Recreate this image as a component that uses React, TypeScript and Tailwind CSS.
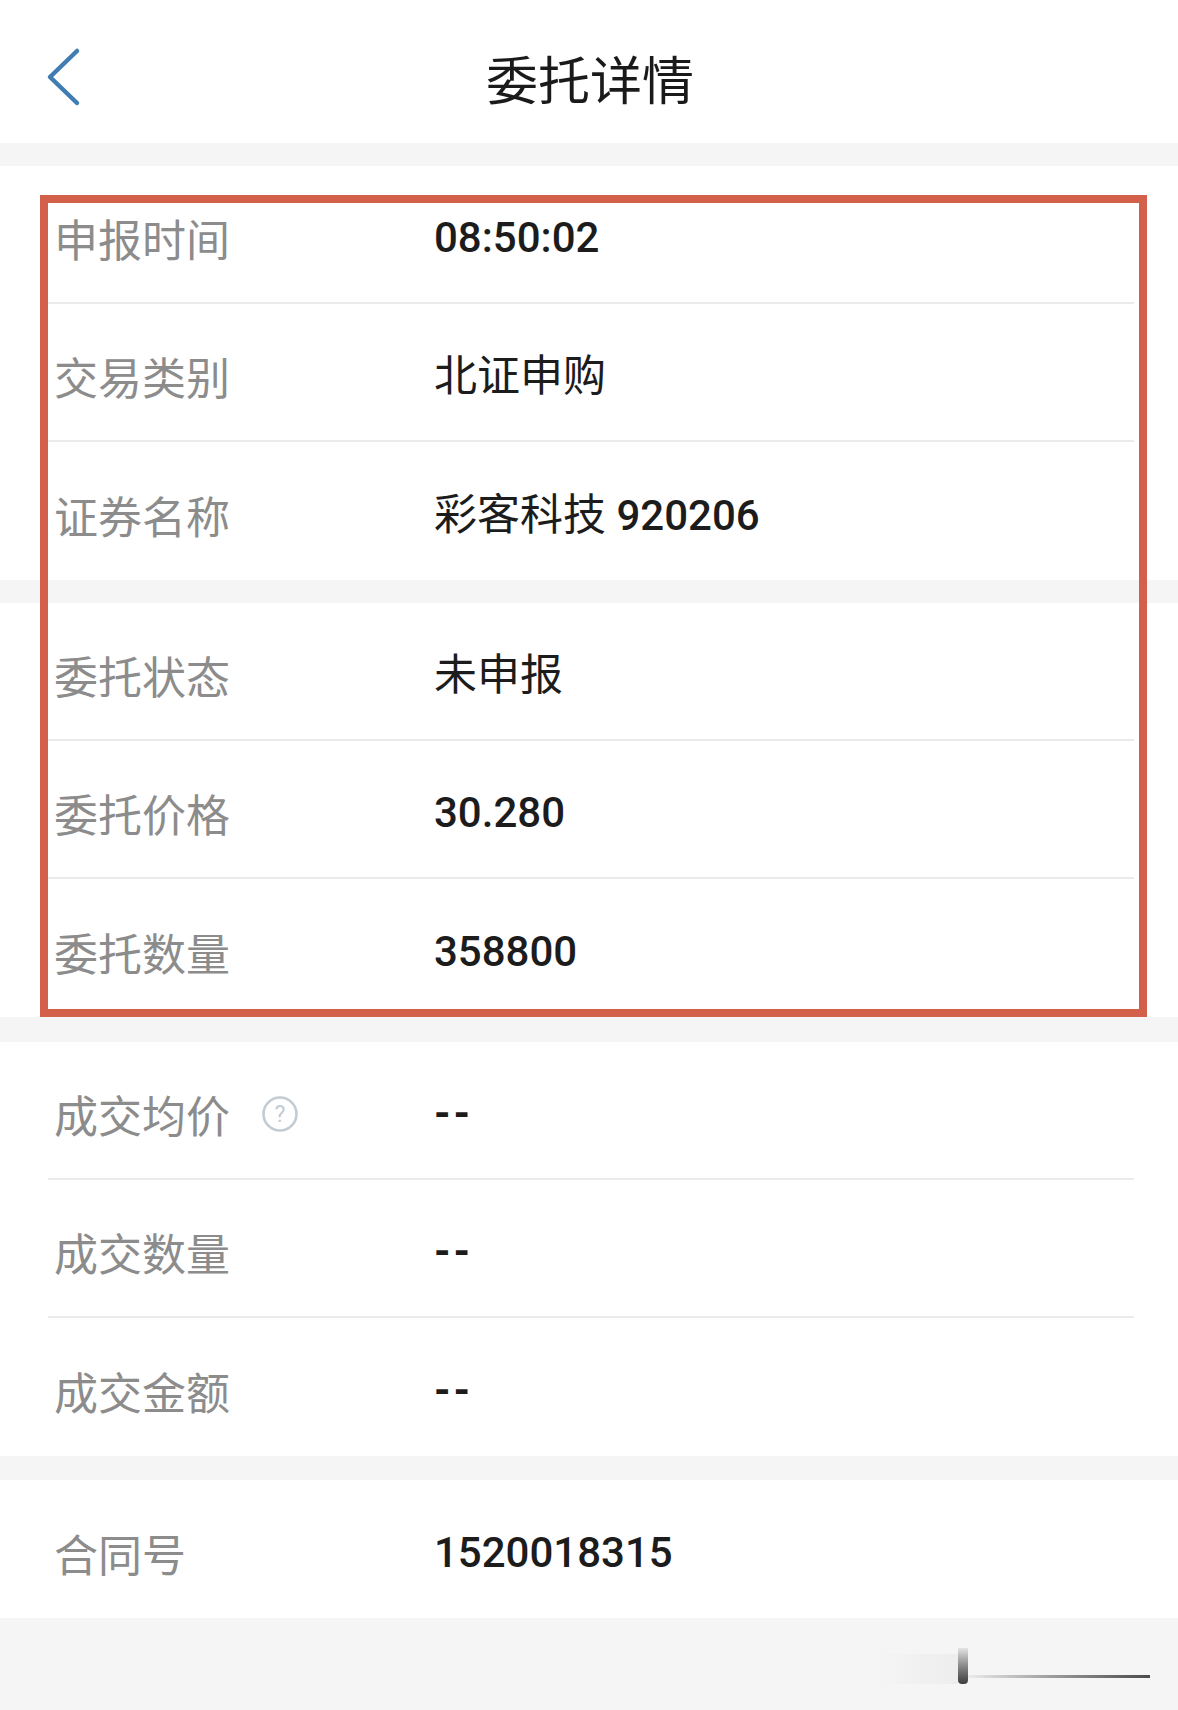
import React from 'react';

type Row = { label: string; value: string; help?: boolean };

const cjk = "font-['Noto_Sans_CJK_SC',sans-serif]";
const num = "font-['Roboto','Noto_Sans_CJK_SC',sans-serif]";

// digits in medium weight, CJK characters regular
const Value: React.FC<{ text: string }> = ({ text }) => {
  const parts = text.split(/([\u4e00-\u9fff]+)/).filter(Boolean);
  return (
    <span className={`${num} text-[42px] leading-none text-[#1c1c1c]`}>
      {parts.map((p, i) =>
        /[\u4e00-\u9fff]/.test(p) ? (
          <span key={i} className="font-normal text-[43px]">{p}</span>
        ) : p === '--' ? (
          <span key={i} className="font-bold tracking-[3px]">{p}</span>
        ) : (
          <span key={i} className="font-medium">{p}</span>
        )
      )}
    </span>
  );
};

const Section: React.FC<{ rows: Row[] }> = ({ rows }) => (
  <div className="bg-white">
    {rows.map((r, i) => (
      <div
        key={r.label}
        className={`ml-[48px] mr-[44px] h-[138px] pt-[8px] flex items-center ${
          i < rows.length - 1 ? 'border-b-2 border-[#ebebeb]' : ''
        }`}
      >
        <div className="w-[386px] pl-[6px] flex items-center">
          <span className={`${cjk} text-[44px] leading-none text-[#8c8c8c]`}>{r.label}</span>
          {r.help && (
            <svg width="38" height="38" viewBox="0 0 38 38" className="ml-[31px]">
              <circle cx="19" cy="19" r="16.5" fill="none" stroke="#c3cbd3" strokeWidth="2.6" />
              <text
                x="19"
                y="27"
                textAnchor="middle"
                fontSize="23"
                fill="#c3cbd3"
                fontFamily="Roboto, sans-serif"
              >
                ?
              </text>
            </svg>
          )}
        </div>
        <Value text={r.value} />
      </div>
    ))}
  </div>
);

export default function App() {
  return (
    <div className="min-h-[1710px] bg-[#f5f5f5] flex flex-col">
      <header className="h-[143px] bg-white relative flex items-center justify-center">
        <svg
          width="40"
          height="60"
          viewBox="0 0 40 60"
          className="absolute left-[44px] top-[47px]"
        >
          <polyline
            points="33,4 6,30 33,56"
            fill="none"
            stroke="#3f7db3"
            strokeWidth="4.5"
            strokeLinecap="round"
            strokeLinejoin="round"
          />
        </svg>
        <h1 className={`${cjk} text-[52px] leading-none text-[#1a1a1a] ml-[2px] mt-[12px]`}>委托详情</h1>
      </header>

      <div className="relative mt-[23px] flex flex-col gap-[23px]">
        <Section
          rows={[
            { label: '申报时间', value: '08:50:02' },
            { label: '交易类别', value: '北证申购' },
            { label: '证券名称', value: '彩客科技 920206' },
          ]}
        />
        <Section
          rows={[
            { label: '委托状态', value: '未申报' },
            { label: '委托价格', value: '30.280' },
            { label: '委托数量', value: '358800' },
          ]}
        />
        <div className="absolute top-[29px] left-[40px] w-[1107px] bottom-0 border-[8px] border-[#d2604b] pointer-events-none" />
      </div>

      <div className="mt-[25px]">
        <Section
          rows={[
            { label: '成交均价', value: '--', help: true },
            { label: '成交数量', value: '--' },
            { label: '成交金额', value: '--' },
          ]}
        />
      </div>

      <div className="mt-[24px]">
        <Section rows={[{ label: '合同号', value: '1520018315' }]} />
      </div>

      <div className="flex-1 flex justify-end pr-[28px] pt-[30px]">
        <div className="flex items-end h-[36px] w-[272px] opacity-80">
          <div className="w-[80px] h-[30px] bg-gradient-to-r from-transparent to-[#ececec]" />
          <div className="w-[10px] h-[36px] rounded-b bg-gradient-to-b from-[#e0e0e0] to-[#111]" />
          <div className="flex-1 h-[3px] mb-[6px] bg-gradient-to-r from-[#eaeaea] to-[#222]" />
        </div>
      </div>
    </div>
  );
}
